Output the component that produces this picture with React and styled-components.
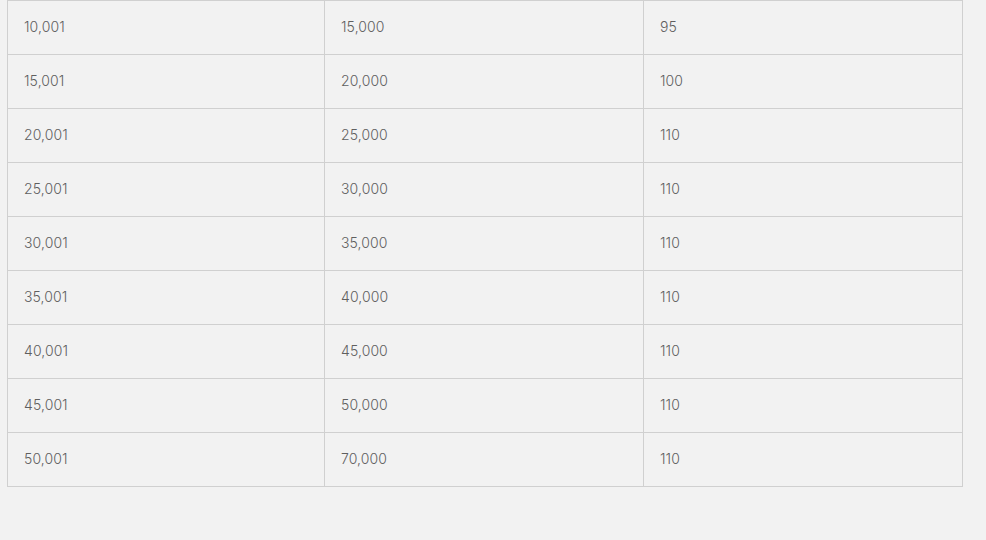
import React from "react";
import styled, { createGlobalStyle } from "styled-components";

const Global = createGlobalStyle`
  html, body { margin: 0; padding: 0; background: #f2f2f2; }
  body { font-family: "Inter", "Open Sans", sans-serif; }
`;

const Page = styled.div`
  padding: 0 24px 0 7px;
  background: #f2f2f2;
  min-height: 540px;
  box-sizing: border-box;
`;

const Table = styled.table`
  width: 956px;
  border-collapse: collapse;
  table-layout: fixed;
`;

const Col = styled.col`
  width: ${(p) => p.$w}px;
`;

const Cell = styled.td`
  height: 51px;
  padding: 0 16px 2px 16px;
  border: 1px solid #d0d0d0;
  color: #5f5f5f;
  font-size: 14px;
  font-weight: 300;
  letter-spacing: 0.1px;
  vertical-align: middle;
`;

const rows = [
  ["10,001", "15,000", "95"],
  ["15,001", "20,000", "100"],
  ["20,001", "25,000", "110"],
  ["25,001", "30,000", "110"],
  ["30,001", "35,000", "110"],
  ["35,001", "40,000", "110"],
  ["40,001", "45,000", "110"],
  ["45,001", "50,000", "110"],
  ["50,001", "70,000", "110"],
];

export default function App() {
  return (
    <>
      <Global />
      <Page>
        <Table>
          <colgroup>
            <Col $w={317} />
            <Col $w={319} />
            <Col $w={319} />
          </colgroup>
          <tbody>
            {rows.map((r, i) => (
              <tr key={i}>
                {r.map((c, j) => (
                  <Cell key={j}>{c}</Cell>
                ))}
              </tr>
            ))}
          </tbody>
        </Table>
      </Page>
    </>
  );
}
